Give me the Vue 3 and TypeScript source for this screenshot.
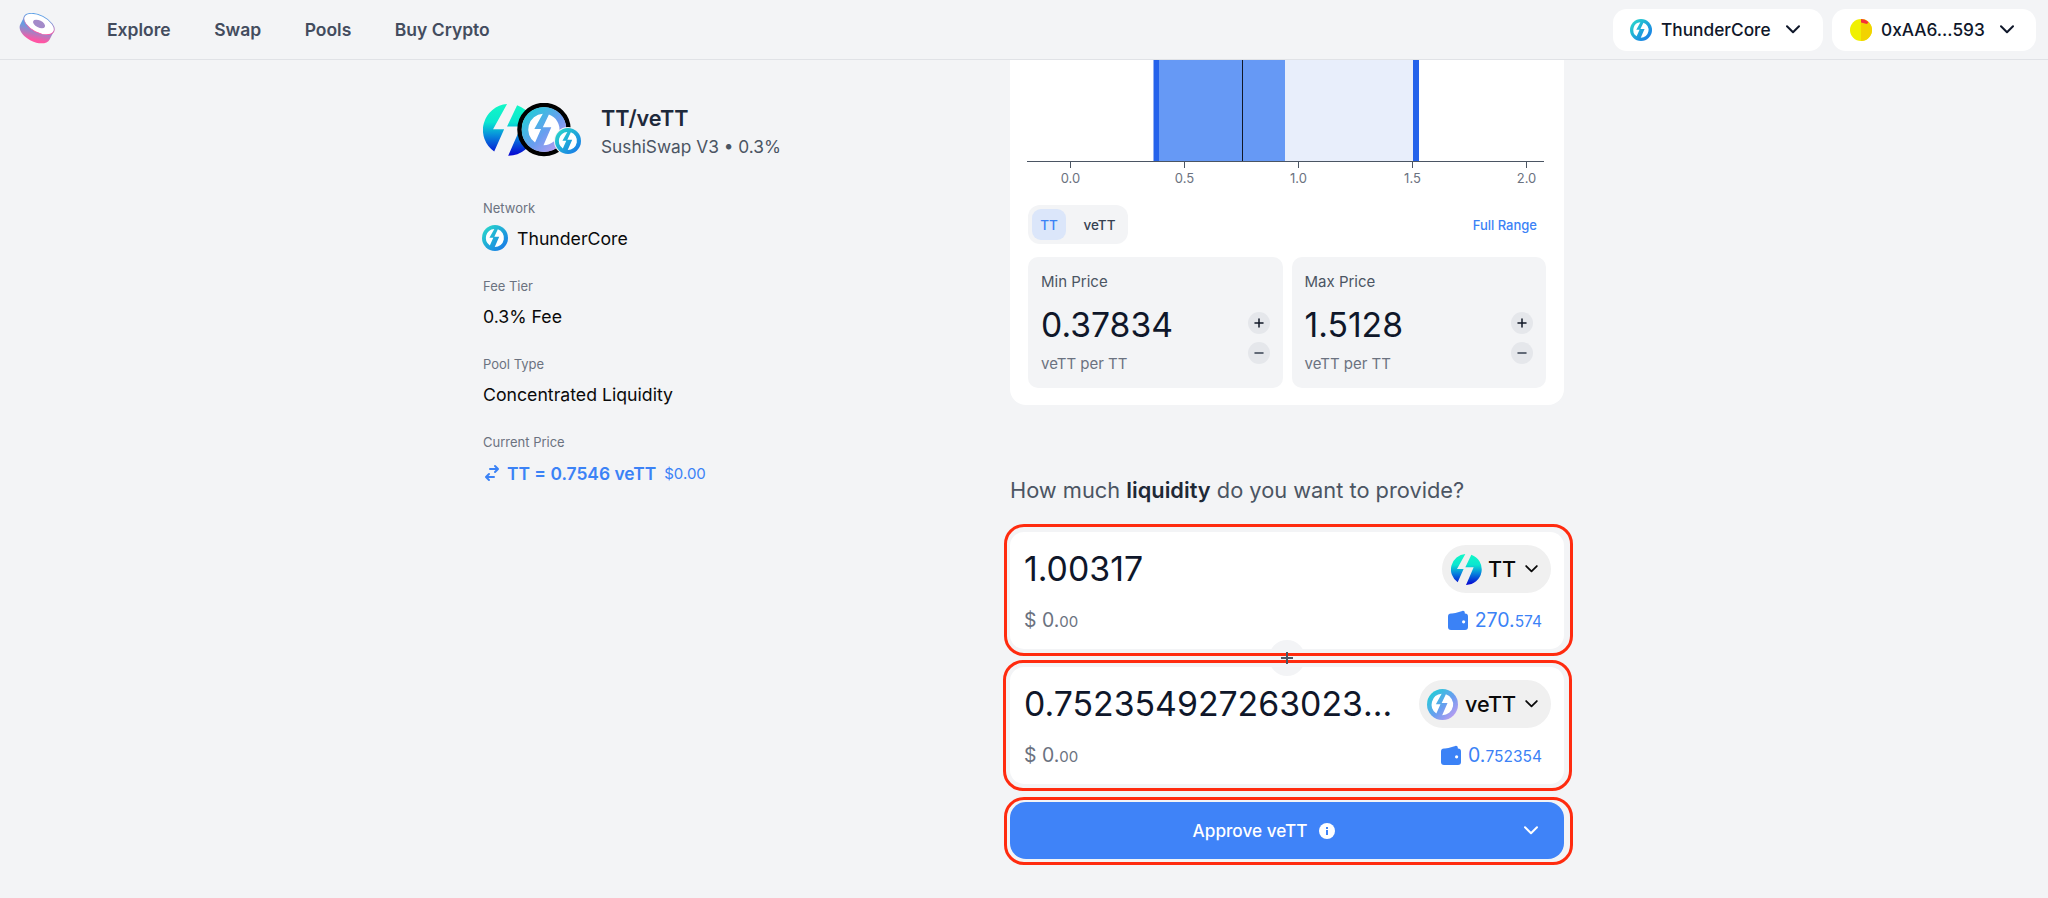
<script setup lang="ts">
interface Detail { label: string; value: string; icon?: boolean }
interface Tick { x: number; label: string }

const navItems: string[] = ['Explore', 'Swap', 'Pools', 'Buy Crypto']
const details: Detail[] = [
  { label: 'Network', value: 'ThunderCore', icon: true },
  { label: 'Fee Tier', value: '0.3% Fee' },
  { label: 'Pool Type', value: 'Concentrated Liquidity' },
]
const ticks: Tick[] = [
  { x: 60.5, label: '0.0' },
  { x: 174.5, label: '0.5' },
  { x: 288.5, label: '1.0' },
  { x: 402.5, label: '1.5' },
  { x: 516.5, label: '2.0' },
]
const prices = [
  { label: 'Min Price', value: '0.37834' },
  { label: 'Max Price', value: '1.5128' },
]
</script>

<template>
  <div class="page">
    <svg class="defs" width="0" height="0" aria-hidden="true">
      <defs>
        <linearGradient id="ttGrad" gradientUnits="userSpaceOnUse" x1="0" y1="0" x2="0" y2="32">
          <stop offset="0" stop-color="#12f8c6" />
          <stop offset=".35" stop-color="#0be6d0" />
          <stop offset=".62" stop-color="#0786dc" />
          <stop offset="1" stop-color="#0600d2" />
        </linearGradient>
        <linearGradient id="tcGrad" x1="0" y1="0" x2="1" y2="1">
          <stop offset="0" stop-color="#2ae0c8" />
          <stop offset="1" stop-color="#1670ea" />
        </linearGradient>
        <linearGradient id="veGrad" x1="0" y1="0" x2="1" y2="1">
          <stop offset="0" stop-color="#12d8d2" />
          <stop offset=".55" stop-color="#6a9df0" />
          <stop offset="1" stop-color="#d49cf0" />
        </linearGradient>
        <linearGradient id="sushiGrad" x1="0" y1="0" x2=".5" y2="1">
          <stop offset="0" stop-color="#4fa6ee" />
          <stop offset=".35" stop-color="#6d9ade" />
          <stop offset=".65" stop-color="#b07cc0" />
          <stop offset=".95" stop-color="#ff55a4" />
        </linearGradient>
        <symbol id="ttIcon" viewBox="0 0 32 32">
          <path d="M14.800.05A16 16 0 0 0 6.900 29.200L13 15.500H6.200Z" fill="url(#ttGrad)" />
          <path d="M21 .8 14.800 13.800h8.600L15.500 31.900A16 16 0 0 0 21 .8Z" fill="url(#ttGrad)" />
        </symbol>
        <symbol id="tcIcon" viewBox="0 0 32 32">
          <circle cx="16" cy="16" r="16" fill="url(#tcGrad)" />
          <g transform="translate(16 16) scale(.7) translate(-16 -16)" fill="#fff">
            <path d="M14.800.05A16 16 0 0 0 6.900 29.200L13 15.500H6.200Z" />
            <path d="M21 .8 14.800 13.800h8.600L15.500 31.900A16 16 0 0 0 21 .8Z" />
          </g>
        </symbol>
        <symbol id="veIcon" viewBox="0 0 32 32">
          <circle cx="16" cy="16" r="16" fill="url(#veGrad)" />
          <g transform="translate(16 16) scale(.7) translate(-16 -16)" fill="#fff">
            <path d="M14.800.05A16 16 0 0 0 6.900 29.200L13 15.500H6.200Z" />
            <path d="M21 .8 14.800 13.800h8.600L15.500 31.900A16 16 0 0 0 21 .8Z" />
          </g>
        </symbol>
        <symbol id="walletIcon" viewBox="0 0 20 20">
          <path d="M2.200 4.600 14.400.9c1.300-.4 2.400.5 2.400 1.800v1.900H2.200Z" fill="#3b82f6" />
          <rect x="0" y="3.600" width="20" height="16.400" rx="3" fill="#3b82f6" />
          <circle cx="15.600" cy="11.800" r="1.600" fill="#fff" />
        </symbol>
        <symbol id="chev" viewBox="0 0 14 9">
          <path d="M1 1.200 7 7.200l6-6" fill="none" stroke="currentColor" stroke-width="2" stroke-linecap="round" stroke-linejoin="round" />
        </symbol>
      </defs>
    </svg>

    <header class="topbar">
      <div class="brand">
        <svg class="logo" width="38" height="34" viewBox="0 0 38 34">
          <g transform="rotate(27 19 15)">
            <path d="M2.500 10.500v9C2.500 25 10 29 19 29s16.500-4 16.500-9.500v-9Z" fill="url(#sushiGrad)" />
            <ellipse cx="19" cy="10.500" rx="16.500" ry="8.500" fill="#fff" stroke="url(#sushiGrad)" stroke-width=".9" />
            <ellipse cx="19" cy="10.500" rx="6.500" ry="3.500" fill="#a48bc9" />
          </g>
        </svg>
        <nav class="nav">
          <a v-for="item in navItems" :key="item" class="nav-item">{{ item }}</a>
        </nav>
      </div>
      <div class="actions">
        <button class="head-btn net-btn">
          <svg class="head-icon"><use href="#tcIcon" /></svg>
          <span class="head-text">ThunderCore</span>
          <svg class="chev"><use href="#chev" /></svg>
        </button>
        <button class="head-btn wallet-btn">
          <svg class="head-icon" viewBox="0 0 22 22">
            <circle cx="11" cy="11" r="11" fill="#f0f000" />
            <path d="M11 0a11 11 0 0 1 0 22Z" fill="#f2d300" />
            <path d="M11 0a11 11 0 0 1 7.500 3L17 5 11 3.500Z" fill="#f6303a" />
          </svg>
          <span class="head-text">0xAA6...593</span>
          <svg class="chev"><use href="#chev" /></svg>
        </button>
      </div>
    </header>

    <main class="main">
      <section class="left">
        <div class="pool-head">
          <svg class="pool-icons" width="100" height="54" viewBox="0 0 100 54">
            <use href="#ttIcon" x="0" y="1" width="52" height="52" />
            <circle cx="61" cy="26.500" r="24.500" fill="#f3f4f6" stroke="#000" stroke-width="4.500" />
            <use href="#veIcon" x="38.500" y="4" width="45" height="45" />
            <circle cx="85" cy="38" r="14" fill="#f3f4f6" />
            <use href="#tcIcon" x="72" y="25" width="26" height="26" />
          </svg>
          <div class="pool-titles">
            <div class="pool-name">TT/veTT</div>
            <div class="pool-sub">SushiSwap V3 • 0.3%</div>
          </div>
        </div>

        <div v-for="d in details" :key="d.label" class="detail">
          <div class="detail-label">{{ d.label }}</div>
          <div class="detail-value">
            <svg v-if="d.icon" class="detail-icon"><use href="#tcIcon" /></svg>
            {{ d.value }}
          </div>
        </div>

        <div class="detail">
          <div class="detail-label">Current Price</div>
          <div class="detail-value price-line">
            <svg class="swap-icon" viewBox="0 0 20 20" fill="#3b82f6">
              <path d="M8 5a1 1 0 100 2h5.586l-1.293 1.293a1 1 0 001.414 1.414l3-3a1 1 0 000-1.414l-3-3a1 1 0 10-1.414 1.414L13.586 5H8zM12 15a1 1 0 100-2H6.414l1.293-1.293a1 1 0 10-1.414-1.414l-3 3a1 1 0 000 1.414l3 3a1 1 0 001.414-1.414L6.414 15H12z" />
            </svg>
            <span class="price-main">TT = 0.7546 veTT</span>
            <span class="price-usd">$0.00</span>
          </div>
        </div>
      </section>

      <section class="right">
        <div class="range-card">
          <svg class="chart" width="554" height="145" viewBox="0 0 554 145">
            <rect x="144" y="0" width="131" height="101" fill="#6699f5" />
            <rect x="275" y="0" width="128" height="101" fill="#e8eefb" />
            <rect x="143.500" y="0" width="5.500" height="101" fill="#2563eb" />
            <rect x="403" y="0" width="6" height="101" fill="#2563eb" />
            <rect x="232" y="0" width="1" height="101" fill="#111827" />
            <rect x="17" y="101" width="517" height="1" fill="#4b5563" />
            <g v-for="t in ticks" :key="t.label">
              <rect :x="t.x - .5" y="102" width="1" height="6" fill="#4b5563" />
              <text class="tick" :x="t.x" y="122.500" text-anchor="middle">{{ t.label }}</text>
            </g>
          </svg>

          <div class="range-body">
            <div class="range-row">
              <div class="toggle">
                <span class="toggle-item active">TT</span>
                <span class="toggle-item toggle-off">veTT</span>
              </div>
              <a class="full-range">Full Range</a>
            </div>
            <div class="price-grid">
              <div v-for="p in prices" :key="p.label" class="price-card">
                <div class="price-info">
                  <div class="price-label">{{ p.label }}</div>
                  <div class="price-value">{{ p.value }}</div>
                  <div class="price-unit">veTT per TT</div>
                </div>
                <div class="steppers">
                  <span class="stepper">
                    <svg width="10" height="10" viewBox="0 0 10 10"><path d="M5 1v8M1 5h8" stroke="#111827" stroke-width="1.500" stroke-linecap="round" /></svg>
                  </span>
                  <span class="stepper">
                    <svg width="10" height="10" viewBox="0 0 10 10"><path d="M1 5h8" stroke="#374151" stroke-width="1.500" stroke-linecap="round" /></svg>
                  </span>
                </div>
              </div>
            </div>
          </div>
        </div>

        <h2 class="question">How much <strong>liquidity</strong> do you want to provide?</h2>

        <div class="stack">
          <div class="panel">
            <div class="panel-top">
              <div class="amount">1.00317</div>
              <div class="pill pill-tt">
                <svg class="pill-icon"><use href="#ttIcon" /></svg>
                <span class="pill-text">TT</span>
                <svg class="pill-chev"><use href="#chev" /></svg>
              </div>
            </div>
            <div class="panel-bottom">
              <div class="usd">$ 0.<small>00</small></div>
              <div class="balance">
                <svg class="wallet"><use href="#walletIcon" /></svg>
                <span>270.<small>574</small></span>
              </div>
            </div>
            <div class="mark mark-one"></div>
          </div>

          <div class="plus-disc"></div>
          <svg class="plus-icon" width="12" height="12" viewBox="0 0 12 12"><path d="M6 0v12M0 6h12" stroke="#4b5563" stroke-width="2" /></svg>

          <div class="panel">
            <div class="panel-top">
              <div class="amount amount-long">0.752354927263023847</div>
              <div class="pill pill-ve">
                <svg class="pill-icon"><use href="#veIcon" /></svg>
                <span class="pill-text">veTT</span>
                <svg class="pill-chev"><use href="#chev" /></svg>
              </div>
            </div>
            <div class="panel-bottom">
              <div class="usd">$ 0.<small>00</small></div>
              <div class="balance">
                <svg class="wallet"><use href="#walletIcon" /></svg>
                <span>0.<small>752354</small></span>
              </div>
            </div>
            <div class="mark mark-two"></div>
          </div>

          <div class="approve">
            <div class="approve-main">
              <span>Approve veTT</span>
              <svg class="info" viewBox="0 0 16 16">
                <circle cx="8" cy="8" r="8" fill="#fff" />
                <rect x="7" y="7" width="2" height="5" fill="#3f83f8" />
                <rect x="7" y="4" width="2" height="2" fill="#3f83f8" />
              </svg>
            </div>
            <svg class="approve-chev"><use href="#chev" /></svg>
            <div class="mark mark-three"></div>
          </div>
        </div>
      </section>
    </main>
  </div>
</template>

<style>
html, body {
  margin: 0;
  height: 100%;
  overflow: hidden;
  background: #f3f4f6;
}
</style>

<style scoped>
.page {
  font-family: Inter, "Liberation Sans", sans-serif;
  color: #0f172a;
  background: #f3f4f6;
  height: 898px;
  overflow: hidden;
}
.defs { display: block; width: 0; height: 0; }

.topbar {
  box-sizing: border-box;
  height: 60px;
  display: flex;
  align-items: center;
  justify-content: space-between;
  padding: 0 12px 0 18px;
  border-bottom: 1px solid #e0e2e6;
}
.brand { display: flex; align-items: center; }
.logo { display: block; margin-right: 51px; }
.nav { display: flex; gap: 43.500px; }
.nav-item {
  font-size: 17.500px;
  font-weight: 600;
  color: #434c5e;
}
.actions { display: flex; gap: 9px; }
.head-btn {
  box-sizing: border-box;
  height: 42px;
  display: flex;
  align-items: center;
  border: 0;
  background: #fff;
  border-radius: 14px;
  padding: 0 0 0 17px;
  font-family: inherit;
  color: #0f172a;
}
.net-btn { width: 210px; }
.wallet-btn { width: 204px; padding-left: 18px; }
.head-icon { width: 22px; height: 22px; margin-right: 9px; flex: none; }
.head-text { font-size: 17.300px; font-weight: 500; white-space: nowrap; }
.chev { width: 14px; height: 9px; margin-left: 15px; color: #0f172a; }

.main {
  display: grid;
  grid-template-columns: 527px 554px;
  width: 1081px;
  margin-left: 483px;
}
.left { padding-top: 43px; }
.pool-head { display: flex; align-items: center; height: 54px; margin-bottom: 43px; }
.pool-icons { display: block; margin-right: 18px; flex: none; }
.pool-titles { padding-top: 2px; }
.pool-name { font-size: 21.600px; font-weight: 600; line-height: 28px; color: #1e293b; }
.pool-sub { font-size: 17.300px; line-height: 24px; margin-top: 3px; color: #4b5563; }
.detail { margin-bottom: 28px; }
.detail-label { font-size: 13px; line-height: 16px; color: #6b7280; }
.detail-value {
  display: flex;
  align-items: center;
  height: 24px;
  margin-top: 10px;
  font-size: 17.700px;
  color: #0a0a0a;
}
.price-line { margin-top: 11px; }
.detail-icon { width: 26px; height: 26px; margin: 0 9px 0 -1px; flex: none; }
.swap-icon { width: 20px; height: 20px; margin: 0 5px 0 -1px; flex: none; }
.price-main { font-size: 17.400px; font-weight: 600; color: #3b82f6; }
.price-usd { font-size: 15px; color: #3b82f6; margin-left: 8px; }

.range-card {
  background: #fff;
  border-radius: 0 0 16px 16px;
}
.chart { display: block; }
.tick {
  font-family: Inter, "Liberation Sans", sans-serif;
  font-size: 13px;
  fill: #6b7280;
}
.range-body { padding: 0 18px 17px; }
.range-row {
  display: flex;
  align-items: center;
  justify-content: space-between;
  padding-right: 9px;
}
.toggle {
  box-sizing: border-box;
  width: 100px;
  height: 39px;
  padding: 4px;
  display: flex;
  align-items: stretch;
  background: #f3f4f6;
  border-radius: 12px;
}
.toggle-item {
  display: flex;
  align-items: center;
  justify-content: center;
  font-size: 13.500px;
  font-weight: 500;
  color: #374151;
  flex: 1;
  border-radius: 9px;
}
.toggle-off { padding-left: 9px; }
.toggle-item.active {
  flex: none;
  width: 34px;
  background: #dbe6fa;
  color: #3b82f6;
}
.full-range { font-size: 13px; font-weight: 500; color: #3b82f6; }
.price-grid {
  display: grid;
  grid-template-columns: 1fr 1fr;
  gap: 9px;
  margin-top: 13px;
}
.price-card {
  box-sizing: border-box;
  height: 131px;
  background: #f3f4f6;
  border-radius: 10px;
  display: flex;
  justify-content: space-between;
  padding: 15px 13px 14px;
}
.price-label { font-size: 15px; line-height: 20px; color: #4b5563; }
.price-value { font-size: 33.700px; line-height: 36px; margin-top: 15px; color: #0f172a; }
.price-unit { font-size: 15px; line-height: 20px; margin-top: 11px; color: #6b7280; }
.steppers { display: flex; flex-direction: column; gap: 8px; padding-top: 40px; }
.stepper {
  width: 22px;
  height: 22px;
  border-radius: 50%;
  background: #e5e7eb;
  display: flex;
  align-items: center;
  justify-content: center;
}

.question {
  margin: 73px 0 30px;
  font-size: 21.800px;
  line-height: 24px;
  font-weight: 400;
  color: #4b5563;
}
.question strong { font-weight: 600; color: #1f2937; }

.stack { position: relative; display: flex; flex-direction: column; gap: 18px; }
.panel {
  position: relative;
  box-sizing: border-box;
  height: 117px;
  background: #fff;
  border-radius: 14px;
  padding: 13px 13px 0 14px;
}
.panel-top { display: flex; align-items: center; justify-content: space-between; height: 48px; }
.amount { font-size: 33.800px; line-height: 48px; color: #0f172a; white-space: nowrap; }
.amount-long {
  width: 376px;
  overflow: hidden;
  text-overflow: ellipsis;
}
.pill {
  box-sizing: border-box;
  height: 48px;
  background: #f0f0f0;
  border-radius: 24px;
  display: flex;
  align-items: center;
  flex: none;
}
.pill-tt { width: 109px; padding-left: 9px; }
.pill-ve { width: 132px; padding-left: 8px; }
.pill-icon { width: 31px; height: 31px; margin-right: 6px; flex: none; }
.pill-ve .pill-icon { margin-right: 7px; }
.pill-text { font-size: 21.600px; font-weight: 500; color: #0a0a0a; }
.pill-chev { width: 13px; height: 8px; margin-left: 9px; color: #0a0a0a; }
.panel-bottom {
  display: flex;
  align-items: center;
  justify-content: space-between;
  height: 24px;
  margin-top: 15px;
  padding-right: 9px;
}
.usd { font-size: 19.400px; color: #6b7280; }
.usd small { font-size: 15px; }
.balance { display: flex; align-items: center; gap: 7px; font-size: 19.500px; color: #3b82f6; }
.balance small { font-size: 15.500px; }
.wallet { width: 20px; height: 20px; flex: none; }

.plus-disc {
  position: absolute;
  left: 259px;
  top: 108px;
  width: 36px;
  height: 36px;
  border-radius: 50%;
  background: #f3f4f6;
  z-index: 1;
}
.plus-icon { position: absolute; left: 271px; top: 120px; z-index: 3; }

.approve {
  position: relative;
  height: 57px;
  background: #3f83f8;
  border-radius: 16px;
  display: flex;
  align-items: center;
  color: #fff;
}
.approve-main {
  flex: 1;
  display: flex;
  align-items: center;
  justify-content: center;
  gap: 12px;
  font-size: 17.200px;
  font-weight: 500;
}
.info { width: 16px; height: 16px; flex: none; }
.approve-chev { width: 14px; height: 9px; margin: 0 26px 0 6px; }

.mark {
  position: absolute;
  box-sizing: border-box;
  border: 3px solid #ff2b0f;
  border-radius: 20px;
  z-index: 2;
  pointer-events: none;
}
.mark-one { top: -8px; bottom: -7px; left: -6px; right: -9px; }
.mark-two { top: -7px; bottom: -7px; left: -7px; right: -8px; }
.mark-three { top: -5px; bottom: -6px; left: -6px; right: -9px; }
</style>
